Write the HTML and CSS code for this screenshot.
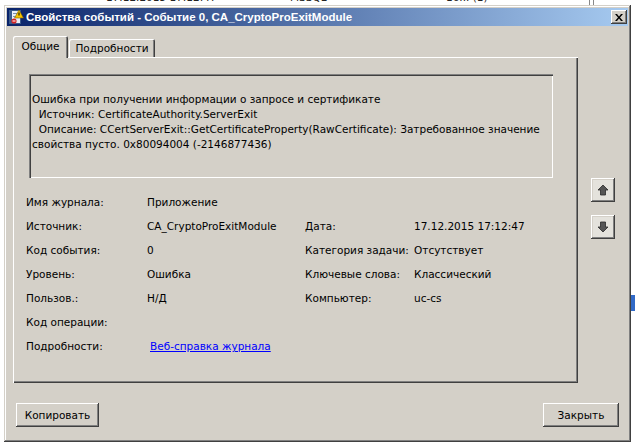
FILE: index.html
```html
<!DOCTYPE html>
<html lang="ru">
<head>
    <meta charset="UTF-8">
    <title>Свойства событий - Событие 0, CA_CryptoProExitModule</title>
    <link rel="stylesheet" href="styles.css">
</head>
<body>
    <div class="desktop">
        <!-- event list behind the dialog, only edges peek out -->
        <div class="backdrop">
            <div class="bg-top">
                <span class="bg-date">17.12.2015 17:12:47</span>
                <span class="bg-src">MSSQL</span>
                <span class="bg-num">16... (1)</span>
            </div>
            <div class="bg-scroll"></div>
            <div class="bg-sel"></div>
        </div>

        <div class="window">
            <div class="titlebar">
                <svg class="app-icon" width="16" height="16" viewBox="0 0 16 16">
                    <rect x="1.5" y="1.5" width="11" height="13" fill="#e8eef8" stroke="#3a5a8c"/>
                    <rect x="1" y="1" width="3" height="14" fill="#3a5a8c"/>
                    <line x1="5" y1="4.5" x2="11" y2="4.5" stroke="#7a8fb0"/>
                    <line x1="5" y1="7.5" x2="11" y2="7.5" stroke="#7a8fb0"/>
                    <polygon points="11,1 15.5,9 6.5,9" fill="#f5c400" stroke="#806000" stroke-width="0.6"/>
                    <rect x="10.5" y="3.5" width="1" height="3" fill="#000"/>
                    <circle cx="6" cy="12" r="2.6" fill="#d42020"/>
                    <rect x="4.5" y="11.5" width="3" height="1" fill="#fff"/>
                </svg>
                <span class="title">Свойства событий - Событие 0, CA_CryptoProExitModule</span>
                <div class="close-btn">
                    <svg width="8" height="7" viewBox="0 0 8 7">
                        <path d="M0 0h2l2 2.5 2-2.5h2l-3 3.5 3 3.5h-2l-2-2.5-2 2.5h-2l3-3.5z" fill="#000"/>
                    </svg>
                </div>
            </div>

            <div class="body">
                <div class="main">
                    <div class="tabs-area">
                        <div class="tab-strip">
                            <div class="tab active">Общие</div>
                            <div class="tab">Подробности</div>
                        </div>
                        <div class="panel">
                            <div class="desc">
                                <div>Ошибка при получении информации о запросе и сертификате</div>
                                <div>&nbsp; Источник: CertificateAuthority.ServerExit</div>
                                <div>&nbsp; Описание: CCertServerExit::GetCertificateProperty(RawCertificate): Затребованное значение</div>
                                <div>свойства пусто. 0x80094004 (-2146877436)</div>
                            </div>
                            <div class="fields">
                                <span>Имя журнала:</span><span>Приложение</span><span></span><span></span>
                                <span>Источник:</span><span>CA_CryptoProExitModule</span><span>Дата:</span><span>17.12.2015 17:12:47</span>
                                <span>Код события:</span><span>0</span><span>Категория задачи:</span><span>Отсутствует</span>
                                <span>Уровень:</span><span>Ошибка</span><span>Ключевые слова:</span><span>Классический</span>
                                <span>Пользов.:</span><span>Н/Д</span><span>Компьютер:</span><span>uc-cs</span>
                                <span>Код операции:</span><span></span><span></span><span></span>
                                <span>Подробности:</span><span><a class="link" href="#">Веб-справка журнала</a></span><span></span><span></span>
                            </div>
                        </div>
                    </div>
                    <div class="side">
                        <div class="arrow-btn">
                            <svg width="12" height="12" viewBox="0 0 12 12">
                                <polygon points="6,1 11,6 8.5,6 8.5,11 3.5,11 3.5,6 1,6" fill="#555" stroke="#2a2a2a" stroke-width="0.8"/>
                            </svg>
                        </div>
                        <div class="arrow-btn">
                            <svg width="12" height="12" viewBox="0 0 12 12">
                                <polygon points="6,11 11,6 8.5,6 8.5,1 3.5,1 3.5,6 1,6" fill="#555" stroke="#2a2a2a" stroke-width="0.8"/>
                            </svg>
                        </div>
                    </div>
                </div>
                <div class="footer">
                    <div class="btn btn-copy">Копировать</div>
                    <div class="btn btn-close">Закрыть</div>
                </div>
            </div>
        </div>
    </div>
</body>
</html>
```

FILE: styles.css
```css
body {
    margin: 0;
    padding: 0;
    background: #fff;
    font-family: "DejaVu Sans", Tahoma, sans-serif;
    font-size: 10.5px;
    color: #000;
}
.desktop {
    position: relative;
    width: 635px;
    height: 444px;
    overflow: hidden;
    background: #fff;
}
.backdrop {
    position: absolute;
    left: 0;
    top: 0;
    width: 635px;
    height: 444px;
}
.bg-top {
    position: absolute;
    top: -9px;
    left: 0;
    width: 635px;
    height: 14px;
    color: #222;
}
.bg-date {
    position: absolute;
    left: 106px;
}
.bg-src {
    position: absolute;
    left: 290px;
}
.bg-num {
    position: absolute;
    left: 446px;
}
.bg-scroll {
    position: absolute;
    left: 589px;
    top: 0;
    width: 3px;
    height: 5px;
    border-left: 1px solid #888;
    border-right: 1px solid #888;
}
.bg-sel {
    position: absolute;
    left: 600px;
    top: 295px;
    width: 40px;
    height: 16px;
    background: #3169c6;
}
.window {
    position: absolute;
    left: 4px;
    top: 5px;
    width: 627px;
    height: 437px;
    box-sizing: border-box;
    padding: 3px;
    background: #d4d0c8;
    box-shadow: inset -1px -1px #404040, inset 1px 1px #d4d0c8, inset -2px -2px #808080, inset 2px 2px #fff;
    display: flex;
    flex-direction: column;
}
.titlebar {
    height: 18px;
    background: linear-gradient(to right, #0a246a, #a6caf0);
    display: flex;
    align-items: center;
    padding-left: 1px;
    padding-right: 1px;
}
.app-icon {
    flex: none;
    margin-right: 2px;
}
.title {
    color: #fff;
    font-family: "Liberation Sans", Arial, sans-serif;
    font-weight: bold;
    font-size: 11.5px;
    white-space: nowrap;
}
.close-btn {
    margin-left: auto;
    width: 16px;
    height: 14px;
    background: #d4d0c8;
    box-shadow: inset -1px -1px #404040, inset 1px 1px #fff, inset -2px -2px #808080;
    display: flex;
    align-items: center;
    justify-content: center;
}
.body {
    flex: 1;
    display: flex;
    flex-direction: column;
    padding: 10px 0 12px 6px;
}
.main {
    display: flex;
}
.tabs-area {
    width: 565px;
}
.tab-strip {
    height: 21px;
    display: flex;
    align-items: flex-end;
}
.tab {
    height: 18px;
    width: 86px;
    box-sizing: border-box;
    display: flex;
    align-items: center;
    justify-content: center;
    background: #d4d0c8;
    border-top-left-radius: 2px;
    border-top-right-radius: 2px;
    box-shadow: inset 1px 1px #fff, inset -1px 0 #404040, inset -2px 0 #808080;
    margin-left: 1px;
}
.tab.active {
    position: relative;
    z-index: 1;
    height: 22px;
    width: 55px;
    margin-left: 0;
    margin-bottom: -1px;
    padding-bottom: 2px;
}
.panel {
    height: 326px;
    box-sizing: border-box;
    box-shadow: inset 1px 1px #fff, inset -1px -1px #404040, inset -2px -2px #808080;
    padding-top: 17px;
}
.desc {
    margin-left: 16px;
    width: 524px;
    height: 104px;
    box-sizing: border-box;
    padding: 18px 0 0 3px;
    line-height: 15px;
    white-space: nowrap;
    box-shadow: inset 1px 1px #808080, inset 2px 2px #404040, inset -1px -1px #fff, inset -2px -2px #d4d0c8;
}
.fields {
    margin: 12px 0 0 13px;
    display: grid;
    grid-template-columns: 121px 158px 109px auto;
    grid-auto-rows: 24px;
    align-items: center;
    white-space: nowrap;
}
.link {
    color: #0000ff;
    text-decoration: underline;
    padding-left: 3px;
}
.side {
    margin-left: 13px;
    padding-top: 142px;
    display: flex;
    flex-direction: column;
    gap: 13px;
}
.arrow-btn {
    width: 24px;
    height: 24px;
    box-sizing: border-box;
    background: #e4e2dc;
    box-shadow: inset -1px -1px #404040, inset 1px 1px #fff, inset -2px -2px #808080, inset 2px 2px #d4d0c8;
    display: flex;
    align-items: center;
    justify-content: center;
}
.footer {
    margin-top: 20px;
    padding: 0 9px 0 3px;
    display: flex;
    justify-content: space-between;
}
.btn {
    height: 24px;
    box-sizing: border-box;
    display: flex;
    align-items: center;
    justify-content: center;
    background: #d4d0c8;
    box-shadow: inset -1px -1px #404040, inset 1px 1px #fff, inset -2px -2px #808080, inset 2px 2px #d4d0c8;
}
.btn-copy {
    width: 83px;
}
.btn-close {
    width: 76px;
}
```
